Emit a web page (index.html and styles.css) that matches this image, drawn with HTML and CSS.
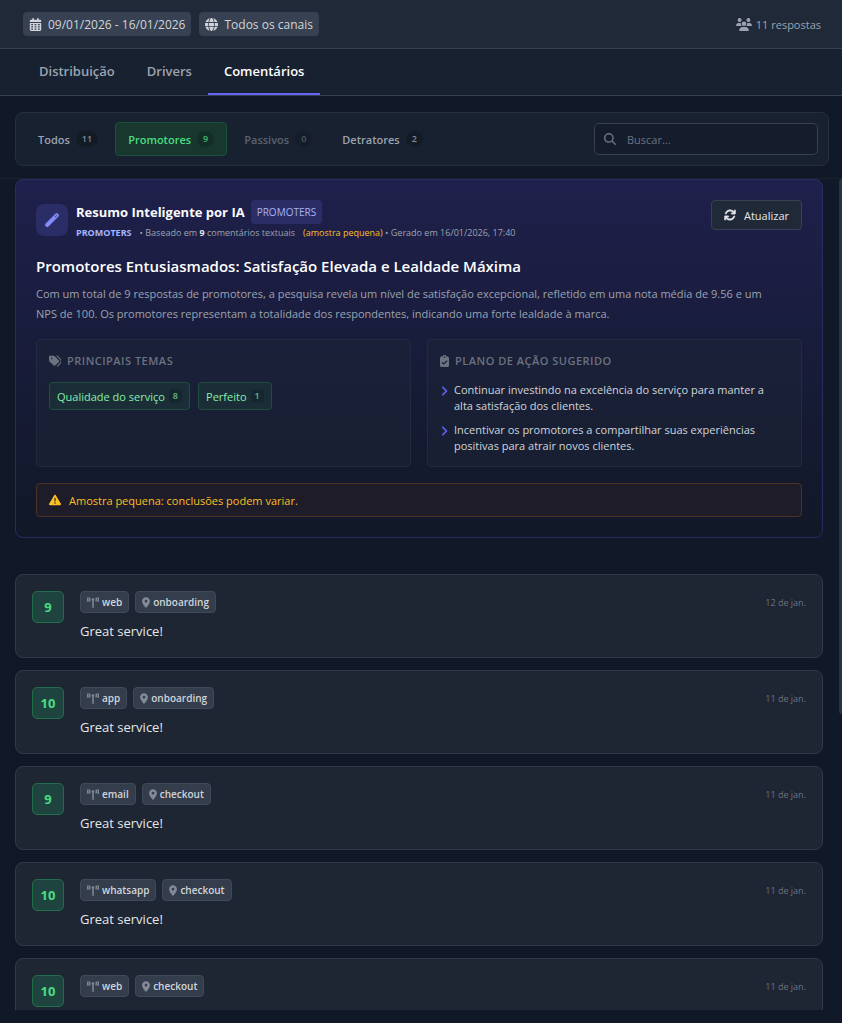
FILE: index.html
```html
<!DOCTYPE html>
<html lang="pt-BR">
<head>
  <meta charset="UTF-8">
  <meta name="viewport" content="width=device-width, initial-scale=1.0">
  <title>Comentários</title>
  <link rel="stylesheet" href="styles.css">
</head>
<body>
  <!-- Shared icons -->
  <svg class="sprite" aria-hidden="true">
    <symbol id="i-calendar" viewBox="0 0 448 512">
      <path fill-rule="evenodd" d="M128 0c18 0 32 14 32 32v32h128V32c0-18 14-32 32-32s32 14 32 32v32h48c27 0 48 21 48 48v48H0v-48c0-27 21-48 48-48h48V32c0-18 14-32 32-32zM0 192h448v272c0 27-21 48-48 48H48c-27 0-48-21-48-48zM56 240v48h72v-48zm132 0v48h72v-48zm132 0v48h72v-48zM56 328v48h72v-48zm132 0v48h72v-48zm132 0v48h72v-48zM56 416v44h72v-44zm132 0v44h72v-44zm132 0v44h72v-44z"/>
    </symbol>
    <symbol id="i-globe" viewBox="0 0 512 512">
      <path d="M352 256c0 22-1 44-3 64H163c-2-20-3-42-3-64s1-44 3-64h186c2 20 3 42 3 64zm29-64h123c5 21 8 42 8 64s-3 43-8 64H381c2-21 3-42 3-64s-1-43-3-64zm112-32H377c-10-64-30-117-55-152 79 21 142 78 171 152zm-149 0H168c6-36 15-68 27-95 10-23 22-40 33-51 11-10 21-14 28-14s17 4 28 14c11 11 23 28 33 51 12 27 21 59 27 95zm-209 0H19C48 86 112 29 190 8c-25 35-45 88-55 152zM8 192h123c-2 21-3 42-3 64s1 43 3 64H8c-5-21-8-42-8-64s3-43 8-64zm187 255c-12-27-21-59-27-95h176c-6 36-15 68-27 95-10 23-22 40-33 51-11 10-21 14-28 14s-17-4-28-14c-11-11-23-28-33-51zm-60-95c10 64 30 117 55 152-78-21-142-78-171-152zm358 0c-29 74-92 131-171 152 25-35 45-88 55-152z"/>
    </symbol>
    <symbol id="i-users" viewBox="0 0 640 512">
      <circle cx="144" cy="80" r="80"/>
      <circle cx="496" cy="80" r="80"/>
      <circle cx="320" cy="224" r="92"/>
      <path d="M0 299c0-59 48-107 107-107h42c16 0 32 4 45 10-1 7-2 14-2 22 0 38 17 72 43 96H21c-11 0-21-10-21-21zM405 320c27-24 43-58 43-96 0-8-1-15-2-22 13-6 29-10 45-10h42c59 0 107 48 107 107 0 11-10 21-21 21zM128 485c0-74 60-133 133-133h118c73 0 133 59 133 133 0 15-12 27-27 27H155c-15 0-27-12-27-27z"/>
    </symbol>
    <symbol id="i-search" viewBox="0 0 512 512">
      <path d="M416 208c0 45.9-14.9 88.3-40 122.7L502.6 457.4c12.5 12.5 12.5 32.8 0 45.3s-32.8 12.5-45.3 0L330.7 376c-34.4 25.2-76.8 40-122.7 40C93.1 416 0 322.9 0 208S93.1 0 208 0S416 93.1 416 208zM208 352a144 144 0 1 0 0-288 144 144 0 1 0 0 288z"/>
    </symbol>
    <symbol id="i-wand" viewBox="0 0 16 16">
      <path fill-rule="evenodd" d="M11.6 1.7a1.500 1.500 0 0 1 2.100 0l.6.6a1.500 1.500 0 0 1 0 2.100L4.300 14.400a1.500 1.500 0 0 1-2.100 0l-.6-.6a1.500 1.500 0 0 1 0-2.100zM12.500 3l-1.800 1.800.6.6 1.800-1.800z" stroke="currentColor" stroke-width="0.4"/>
    </symbol>
    <symbol id="i-sync" viewBox="0 0 512 512">
      <path d="M105 203c9-24 22-46 41-65 63-62 164-62 226 0l18 18h-54c-18 0-32 14-32 32s14 32 32 32h128c18 0 32-14 32-32V60c0-18-14-32-32-32s-32 14-32 32v49l-15-16c-87-87-229-87-316 0-25 24-43 53-54 84-7 17 2 35 18 41s34-1 40-15zM39 289c-14 4-23 16-23 31v128c0 18 14 32 32 32s32-14 32-32v-46l15 13c87 87 229 87 316 0 24-24 42-53 54-84 6-16-2-34-19-40s-35 2-41 19c-9 23-22 45-41 64-62 62-163 62-226 0l-17-22h55c18 0 32-14 32-32s-14-32-32-32H48c-3 0-6 0-9 1z" stroke="currentColor" stroke-width="16"/>
    </symbol>
    <symbol id="i-tags" viewBox="0 0 512 512">
      <path fill-rule="evenodd" d="M0 80v149c0 17 7 33 19 45l168 168c25 25 65 25 90 0l134-134c25-25 25-65 0-90L243 50c-12-12-28-18-45-18H48C21 32 0 53 0 80zm112 32a32 32 0 1 1 0 64 32 32 0 1 1 0-64z"/>
      <path d="M345 39l128 130c52 52 52 137 0 190L361 473" fill="none" stroke="currentColor" stroke-width="48" stroke-linecap="round"/>
    </symbol>
    <symbol id="i-clipboard" viewBox="0 0 384 512">
      <path d="M192 0c-42 0-77 27-91 64H64C29 64 0 93 0 128v320c0 35 29 64 64 64h256c35 0 64-29 64-64V128c0-35-29-64-64-64h-37c-14-37-49-64-91-64zm0 64a32 32 0 1 1 0 64 32 32 0 1 1 0-64zm113 209L177 401c-9 9-25 9-34 0l-64-64c-9-9-9-25 0-34s25-9 34 0l47 47 111-111c9-9 25-9 34 0s9 25 0 34z"/>
    </symbol>
    <symbol id="i-chevron" viewBox="0 0 320 512">
      <path d="M310.6 233.4c12.5 12.5 12.5 32.8 0 45.3l-192 192c-12.5 12.5-32.8 12.5-45.3 0s-12.5-32.8 0-45.3L242.7 256 73.4 86.6c-12.5-12.5-12.5-32.8 0-45.3s32.8-12.5 45.3 0l192 192z" stroke="currentColor" stroke-width="20"/>
    </symbol>
    <symbol id="i-warning" viewBox="0 0 512 512">
      <path d="M256 32c14.2 0 27.3 7.5 34.5 19.8l216 368c7.3 12.4 7.3 27.7 .2 40.1S486.3 480 472 480H40c-14.3 0-27.6-7.7-34.7-20.1s-7-27.8 .2-40.1l216-368C228.7 39.5 241.8 32 256 32zm0 128c-13.3 0-24 10.7-24 24V296c0 13.3 10.7 24 24 24s24-10.7 24-24V184c0-13.3-10.7-24-24-24zm32 224a32 32 0 1 0 -64 0 32 32 0 1 0 64 0z"/>
    </symbol>
    <symbol id="i-tower" viewBox="0 0 576 512">
      <path d="M50 30c-26 56-26 114 0 170M140 55c-16 40-16 80 0 120M526 30c26 56 26 114 0 170M436 55c16 40 16 80 0 120M288 130v350" fill="none" stroke="currentColor" stroke-width="70" stroke-linecap="round"/>
      <circle cx="288" cy="112" r="62"/>
    </symbol>
    <symbol id="i-pin" viewBox="0 0 384 512">
      <path d="M215.7 499.2C267 435 384 279.4 384 192C384 86 298 0 192 0S0 86 0 192c0 87.4 117 243 168.3 307.2c12.3 15.3 35.1 15.3 47.4 0zM192 128a64 64 0 1 1 0 128 64 64 0 1 1 0-128z"/>
    </symbol>
  </svg>

  <header class="topbar">
    <span class="chip"><svg class="icon"><use href="#i-calendar"/></svg>09/01/2026 - 16/01/2026</span>
    <span class="chip"><svg class="icon"><use href="#i-globe"/></svg>Todos os canais</span>
    <span class="total"><svg class="icon icon-wide"><use href="#i-users"/></svg>11 respostas</span>
  </header>

  <nav class="tabs">
    <a class="tab" href="#">Distribuição</a>
    <a class="tab" href="#">Drivers</a>
    <a class="tab active" href="#">Comentários</a>
  </nav>

  <div class="filters">
    <button class="filter">Todos <span class="count">11</span></button>
    <button class="filter active">Promotores <span class="count">9</span></button>
    <button class="filter" disabled>Passivos <span class="count">0</span></button>
    <button class="filter">Detratores <span class="count">2</span></button>
    <label class="search">
      <svg class="icon"><use href="#i-search"/></svg>
      <input type="text" placeholder="Buscar..." aria-label="Buscar">
    </label>
  </div>

  <main class="content">
    <div class="scroll">
      <!-- AI summary -->
      <section class="summary">
        <div class="summary-header">
          <div class="summary-icon"><svg class="icon icon-large"><use href="#i-wand"/></svg></div>
          <div class="summary-info">
            <div class="summary-title"><h2>Resumo Inteligente por IA</h2><span class="pill">PROMOTERS</span></div>
            <div class="meta">
              <b class="segment">PROMOTERS</b>
              <span>• Baseado em <b class="bright">9</b> comentários textuais</span>
              <span><span class="small-sample">(amostra pequena)</span> • Gerado em 16/01/2026, 17:40</span>
            </div>
          </div>
          <button class="refresh"><svg class="icon"><use href="#i-sync"/></svg>Atualizar</button>
        </div>

        <h3 class="headline">Promotores Entusiasmados: Satisfação Elevada e Lealdade Máxima</h3>
        <p class="description">Com um total de 9 respostas de promotores, a pesquisa revela um nível de satisfação excepcional, refletido em uma nota média de 9.56 e um NPS de 100. Os promotores representam a totalidade dos respondentes, indicando uma forte lealdade à marca.</p>

        <div class="panels">
          <div class="panel">
            <h4><svg class="icon"><use href="#i-tags"/></svg>PRINCIPAIS TEMAS</h4>
            <div class="themes">
              <span class="theme">Qualidade do serviço <span class="theme-count">8</span></span>
              <span class="theme">Perfeito <span class="theme-count">1</span></span>
            </div>
          </div>
          <div class="panel">
            <h4><svg class="icon icon-narrow"><use href="#i-clipboard"/></svg>PLANO DE AÇÃO SUGERIDO</h4>
            <ul class="actions">
              <li><svg class="icon"><use href="#i-chevron"/></svg><span>Continuar investindo na excelência do serviço para manter a alta satisfação dos clientes.</span></li>
              <li><svg class="icon"><use href="#i-chevron"/></svg><span>Incentivar os promotores a compartilhar suas experiências positivas para atrair novos clientes.</span></li>
            </ul>
          </div>
        </div>

        <div class="alert"><svg class="icon"><use href="#i-warning"/></svg>Amostra pequena: conclusões podem variar.</div>
      </section>

      <!-- Comments -->
      <section class="comments">
        <article class="comment">
          <div class="score">9</div>
          <div class="comment-body">
            <div class="tags">
              <span class="tag"><svg class="icon"><use href="#i-tower"/></svg>web</span>
              <span class="tag"><svg class="icon icon-pin"><use href="#i-pin"/></svg>onboarding</span>
              <time class="date">12 de jan.</time>
            </div>
            <p>Great service!</p>
          </div>
        </article>
        <article class="comment">
          <div class="score">10</div>
          <div class="comment-body">
            <div class="tags">
              <span class="tag"><svg class="icon"><use href="#i-tower"/></svg>app</span>
              <span class="tag"><svg class="icon icon-pin"><use href="#i-pin"/></svg>onboarding</span>
              <time class="date">11 de jan.</time>
            </div>
            <p>Great service!</p>
          </div>
        </article>
        <article class="comment">
          <div class="score">9</div>
          <div class="comment-body">
            <div class="tags">
              <span class="tag"><svg class="icon"><use href="#i-tower"/></svg>email</span>
              <span class="tag"><svg class="icon icon-pin"><use href="#i-pin"/></svg>checkout</span>
              <time class="date">11 de jan.</time>
            </div>
            <p>Great service!</p>
          </div>
        </article>
        <article class="comment">
          <div class="score">10</div>
          <div class="comment-body">
            <div class="tags">
              <span class="tag"><svg class="icon"><use href="#i-tower"/></svg>whatsapp</span>
              <span class="tag"><svg class="icon icon-pin"><use href="#i-pin"/></svg>checkout</span>
              <time class="date">11 de jan.</time>
            </div>
            <p>Great service!</p>
          </div>
        </article>
        <article class="comment">
          <div class="score">10</div>
          <div class="comment-body">
            <div class="tags">
              <span class="tag"><svg class="icon"><use href="#i-tower"/></svg>web</span>
              <span class="tag"><svg class="icon icon-pin"><use href="#i-pin"/></svg>checkout</span>
              <time class="date">11 de jan.</time>
            </div>
          </div>
        </article>
      </section>
    </div>
    <div class="scroll-thumb"></div>
  </main>
</body>
</html>
```

FILE: styles.css
```css
* {
  box-sizing: border-box;
}

body {
  display: flex;
  flex-direction: column;
  height: 100vh;
  margin: 0;
  padding-bottom: 13px;
  overflow: hidden;
  font-family: "Segoe UI", "Open Sans", "Noto Sans", sans-serif;
  font-size: 11px;
  background-color: #111827;
  color: #d1d5db;
}

h2, h3, h4, p, ul {
  margin: 0;
  padding: 0;
}

button, input {
  font-family: inherit;
  font-size: 11px;
}

.sprite {
  display: none;
}

.icon {
  width: 12px;
  height: 12px;
  flex-shrink: 0;
  fill: currentColor;
}

/* Top bar */
.topbar {
  display: flex;
  align-items: center;
  gap: 8px;
  height: 49px;
  flex-shrink: 0;
  padding: 0 21px 0 23px;
  background-color: #1f2937;
  border-bottom: 1px solid #374151;
}

.chip {
  display: flex;
  align-items: center;
  gap: 6px;
  height: 24px;
  padding: 0 6px;
  font-size: 12px;
  border-radius: 4px;
  background-color: #374151;
}

.chip .icon {
  width: 13px;
  height: 13px;
}

.total {
  display: flex;
  align-items: center;
  gap: 4px;
  margin-left: auto;
  color: #9ca3af;
}

.icon-wide {
  width: 16px;
  height: 13px;
}

/* Tabs */
.tabs {
  display: flex;
  height: 47px;
  flex-shrink: 0;
  padding-left: 23px;
  background-color: #18212f;
  border-bottom: 1px solid #374151;
}

.tab {
  padding: 0 16px;
  line-height: 44px;
  font-size: 13px;
  font-weight: 600;
  color: #9ca3af;
  text-decoration: none;
  border-bottom: 2px solid transparent;
}

.tab.active {
  color: #fff;
  border-bottom-color: #6366f1;
}

/* Filters */
.filters {
  display: flex;
  align-items: center;
  gap: 4px;
  height: 54px;
  flex-shrink: 0;
  margin: 16px 13px 12px 15px;
  padding: 0 10px 0 9px;
  background-color: #18212f;
  border: 1px solid #252f3e;
  border-radius: 8px;
}

.filter {
  display: flex;
  align-items: center;
  gap: 6px;
  height: 34px;
  padding: 0 12px;
  font-weight: 600;
  color: #9ca3af;
  background: none;
  border: 1px solid transparent;
  border-radius: 4px;
  cursor: pointer;
}

.filter.active {
  color: #4ade80;
  background-color: #18372f;
  border-color: #1b5139;
}

.filter:disabled {
  color: #9ca3af;
  opacity: 0.5;
}

.count {
  padding: 0 6px;
  line-height: 16px;
  font-size: 9px;
  font-weight: 600;
  border-radius: 8px;
  background-color: rgba(0, 0, 0, 0.2);
  opacity: 0.8;
}

.search {
  display: flex;
  align-items: center;
  gap: 11px;
  width: 224px;
  height: 32px;
  margin-left: auto;
  padding: 0 9px;
  color: #6b7280;
  background-color: #151c2b;
  border: 1px solid #374151;
  border-radius: 5px;
}

.search input {
  flex: 1;
  min-width: 0;
  padding: 0;
  color: #d1d5db;
  background: none;
  border: none;
  outline: none;
}

.search input::placeholder {
  color: #6b7280;
}

/* Scrolling content */
.content {
  position: relative;
  flex: 1;
  min-height: 0;
  border-top: 1px solid #18222f;
}

.scroll {
  height: 100%;
  padding: 0 19px 0 15px;
  overflow: hidden;
}

.scroll-thumb {
  position: absolute;
  top: 0;
  right: 0;
  width: 3px;
  height: 64.4%;
  border-radius: 3px 0 0 3px;
  background-color: #293240;
}

/* AI summary */
.summary {
  margin-bottom: 36px;
  padding: 20px;
  background: linear-gradient(to bottom, #1f204c, #111827);
  border: 1px solid #292c61;
  border-radius: 8px;
}

.summary-header {
  display: flex;
  align-items: center;
  gap: 8px;
  margin-bottom: 16px;
}

.summary-icon {
  display: flex;
  align-items: center;
  justify-content: center;
  width: 32px;
  height: 32px;
  border-radius: 8px;
  color: #818cf8;
  background-color: #2b2d66;
}

.icon-large {
  width: 16px;
  height: 16px;
}

.summary-title {
  display: flex;
  align-items: center;
  gap: 6px;
  height: 24px;
}

.summary-title h2 {
  font-size: 13px;
  font-weight: 700;
  color: #f9fafb;
}

.pill {
  padding: 0 6px;
  line-height: 24px;
  font-size: 10px;
  color: #a5b4fc;
  background-color: #2b2d66;
  border-radius: 4px;
}

.meta {
  display: flex;
  gap: 8px;
  font-size: 9px;
  line-height: 18px;
  height: 16px;
  color: #9ca3af;
}

.segment {
  color: #a5b4fc;
}

.bright {
  color: #e5e7eb;
}

.small-sample {
  color: #fbbf24;
}

.refresh {
  display: flex;
  align-items: center;
  align-self: flex-start;
  gap: 8px;
  height: 30px;
  margin-left: auto;
  padding: 0 12px;
  font-weight: 500;
  color: #e5e7eb;
  background-color: #1f2937;
  border: 1px solid #374151;
  border-radius: 4px;
  cursor: pointer;
}

.headline {
  font-size: 15px;
  line-height: 20px;
  font-weight: 600;
  color: #fff;
}

.description {
  margin-top: 8px;
  padding-right: 20px;
  line-height: 20px;
  color: #9ca3af;
}

.panels {
  display: grid;
  grid-template-columns: 1fr 1fr;
  gap: 16px;
  margin: 15px 0 16px;
}

.panel {
  padding: 12px;
  background-color: rgba(31, 41, 55, 0.4);
  border: 1px solid #232a40;
  border-radius: 4px;
}

.panel h4 {
  display: flex;
  align-items: center;
  gap: 6px;
  margin-bottom: 12px;
  font-size: 11px;
  line-height: 18px;
  font-weight: 600;
  letter-spacing: 0.5px;
  color: #6b7280;
}

.icon-narrow {
  width: 9px;
}

.themes {
  display: flex;
  gap: 8px;
}

.theme {
  display: flex;
  align-items: center;
  gap: 4px;
  height: 28px;
  padding: 0 7px;
  color: #86efac;
  background-color: #1b2e37;
  border: 1px solid #1c4f40;
  border-radius: 4px;
}

.theme-count {
  padding: 0 4px;
  line-height: 14px;
  font-size: 9px;
  font-weight: 600;
  border-radius: 4px;
  background-color: rgba(0, 0, 0, 0.2);
  opacity: 0.7;
}

.actions {
  display: flex;
  flex-direction: column;
  gap: 8px;
  padding-right: 12px;
  list-style: none;
}

.actions li {
  display: flex;
  gap: 6px;
  line-height: 16px;
}

.actions .icon {
  width: 8px;
  height: 10px;
  margin-top: 4px;
  color: #6366f1;
}

.alert {
  display: flex;
  align-items: center;
  gap: 8px;
  height: 34px;
  padding: 0 12px;
  color: #fbbf24;
  background-color: #1e1c28;
  border: 1px solid #4b3420;
  border-radius: 4px;
}

/* Comments */
.comments {
  display: flex;
  flex-direction: column;
  gap: 12px;
}

.comment {
  display: flex;
  gap: 16px;
  min-height: 84px;
  padding: 16px;
  background-color: #1e2634;
  border: 1px solid #303a48;
  border-radius: 8px;
}

.score {
  width: 32px;
  height: 32px;
  line-height: 30px;
  text-align: center;
  font-size: 13px;
  font-weight: 700;
  color: #4ade80;
  background-color: #1f443f;
  border: 1px solid #216e49;
  border-radius: 5px;
}

.comment-body {
  flex: 1;
}

.tags {
  display: flex;
  align-items: center;
  gap: 6px;
}

.tag {
  display: flex;
  align-items: center;
  gap: 3px;
  height: 22px;
  padding: 0 6px;
  font-size: 10px;
  font-weight: 600;
  background-color: #343d4b;
  border: 1px solid #404957;
  border-radius: 4px;
}

.tag .icon {
  height: 11px;
  color: #848a95;
}

.tag .icon-pin {
  width: 8px;
}

.date {
  margin-left: auto;
  font-size: 9px;
  color: #6b7280;
}

.comment p {
  margin-top: 8px;
  font-size: 13px;
  line-height: 20px;
  color: #e5e7eb;
}
```
